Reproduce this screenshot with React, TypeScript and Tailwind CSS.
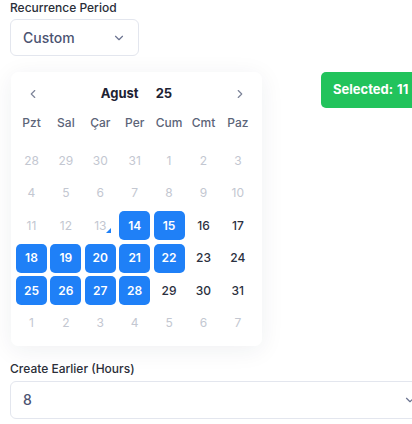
import { ChevronDown, ChevronLeft, ChevronRight } from "lucide-react"

type Day = { n: number; kind: "out" | "off" | "on" | "sel"; today?: boolean }

const WEEKDAYS = ["Pzt", "Sal", "Çar", "Per", "Cum", "Cmt", "Paz"]

const selected = [14, 15, 18, 19, 20, 21, 22, 25, 26, 27, 28]

function buildDays(): Day[] {
  const days: Day[] = []
  for (const n of [28, 29, 30, 31]) days.push({ n, kind: "out" })
  for (let n = 1; n <= 31; n++) {
    if (selected.includes(n)) days.push({ n, kind: "sel" })
    else if (n < 14) days.push({ n, kind: "off", today: n === 13 })
    else days.push({ n, kind: "on" })
  }
  for (let n = 1; n <= 7; n++) days.push({ n, kind: "out" })
  return days
}

function DayCell({ day }: { day: Day }) {
  if (day.kind === "sel") {
    return (
      <div className="flex h-[29px] items-center justify-center rounded-[5px] bg-[#1f80f7] text-[12px] font-semibold text-white">
        {day.n}
      </div>
    )
  }
  return (
    <div
      className={
        "relative flex h-[29px] items-center justify-center text-[12px] " +
        (day.kind === "on" ? "font-medium text-[#2b3040]" : "text-[#c3c7d1]")
      }
    >
      {day.n}
      {day.today && (
        <span className="absolute bottom-[7px] right-[5px] h-0 w-0 border-b-[5px] border-l-[5px] border-b-[#1f80f7] border-l-transparent" />
      )}
    </div>
  )
}

function Calendar() {
  const days = buildDays()
  return (
    <div className="w-[251px] rounded-[7px] bg-white pb-[8px] pl-[5px] pr-[9px] pt-[11px] shadow-[0_4px_24px_rgba(30,40,70,0.07)]">
      <div className="flex h-[22px] items-center justify-between pl-[10px] pr-[6px]">
        <ChevronLeft className="h-[14px] w-[14px] text-[#7d8499]" strokeWidth={2} />
        <div className="flex items-center gap-[17px] text-[13px] font-bold text-[#1d2232]">
          <span>Agust</span>
          <span>25</span>
        </div>
        <ChevronRight className="h-[14px] w-[14px] text-[#7d8499]" strokeWidth={2} />
      </div>
      <div className="mt-[9px] grid grid-cols-[repeat(7,31px)] gap-x-[3.4px] text-[12px] font-medium text-[#5c6478]">
        {WEEKDAYS.map((w) => (
          <div key={w} className="text-center">
            {w}
          </div>
        ))}
      </div>
      <div className="mt-[14px] grid grid-cols-[repeat(7,31px)] gap-x-[3.4px] gap-y-[3.5px]">
        {days.map((d, i) => (
          <DayCell key={i} day={d} />
        ))}
      </div>
    </div>
  )
}

export default function App() {
  return (
    <div className="h-[424px] w-[412px] overflow-hidden bg-white font-['Inter',sans-serif]">
      <div className="pl-[10px]">
        <div className="h-[15px] text-[12px] font-medium leading-[15px] text-[#2a2e38]">Recurrence Period</div>
        <div className="mt-[4px] flex h-[37px] w-[129px] items-center justify-between rounded-[6px] border border-[#e3e6ee] bg-white pl-[12px] pr-[12px]">
          <span className="text-[14px] font-medium text-[#4b5371]">Custom</span>
          <ChevronDown className="h-[14px] w-[14px] text-[#6b7390]" strokeWidth={2} />
        </div>

        <div className="mt-[16px] flex items-start gap-[59px] pl-[1px]">
          <Calendar />
          <div className="flex h-[36px] shrink-0 items-center rounded-[5px] bg-[#22c35c] pl-[12px] pr-[12px] text-[13px] font-bold text-white">
            Selected:<span className="ml-[4px]">11</span>
          </div>
        </div>

        <div className="mt-[15px] h-[15px] text-[12px] font-medium leading-[15px] text-[#2a2e38]">
          Create Earlier (Hours)
        </div>
        <div className="mt-[5px] flex h-[38px] w-[420px] items-center justify-between rounded-[6px] border border-[#e3e6ee] bg-white pl-[12px] pr-[12px]">
          <span className="text-[14px] font-medium text-[#4b5371]">8</span>
          <ChevronDown className="h-[14px] w-[14px] text-[#6b7390]" strokeWidth={2} />
        </div>
      </div>
    </div>
  )
}
